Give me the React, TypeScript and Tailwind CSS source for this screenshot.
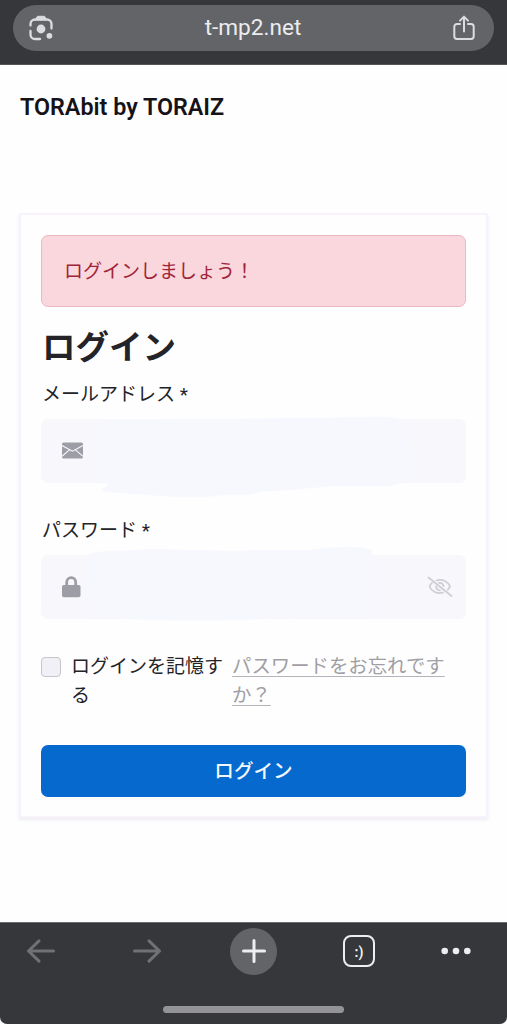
import type { ReactNode } from "react";

export default function App() {
  return (
    <div className="flex h-[1024px] w-[507px] flex-col overflow-hidden bg-[#fefefe] font-['Roboto','Noto_Sans_CJK_JP',sans-serif] text-[#242328]">
      <AddressBar />
      <main className="flex-1 px-[19px]">
        <h1 className="mt-[27px] pl-px text-[23.3px] leading-[30px] font-semibold whitespace-nowrap text-[#151317]">
          TORAbit by TORAIZ
        </h1>
        <LoginCard />
      </main>
      <BottomBar />
    </div>
  );
}

function AddressBar() {
  return (
    <header className="flex h-[65px] shrink-0 items-start border-b border-[#55565a] bg-[#36373b] px-[13px] pt-[5px]">
      <div className="flex h-[46px] w-full items-center justify-between rounded-full bg-[#636468] pr-[18px] pl-[15px] text-[#dcdce0]">
        <LensIcon />
        <span className="text-[22.6px] leading-none text-[#ececf0]">t-mp2.net</span>
        <ShareIcon />
      </div>
    </header>
  );
}

function LoginCard() {
  return (
    <form
      onSubmit={(e) => e.preventDefault()}
      className="mt-[91px] h-[605px] border-2 border-[#f8f3fa] px-5 pt-5 text-[19px] shadow-[0_2px_3px_rgba(90,80,160,0.10)]"
    >
      <div className="flex h-[72px] items-center rounded-[7px] border-[1.5px] border-[#ecb8c2] bg-[#fad6dd] px-[22px] pt-0.5 text-[#a02438]">
        ログインしましょう！
      </div>
      <h2 className="mt-[18px] pl-px text-[33.5px] leading-[46px] font-bold">ログイン</h2>

      <div className="mt-[9px]">
        <Field label="メールアドレス" type="email" icon={<MailIcon />} smudge={<EmailSmudge />} />
      </div>
      <div className="mt-[33px]">
        <Field
          label="パスワード"
          type="password"
          icon={<LockIcon />}
          smudge={<PasswordSmudge />}
          trailing={<EyeOffIcon />}
        />
      </div>

      <div className="mt-[34px] flex leading-[28.5px]">
        <label className="flex w-[191px] shrink-0 items-start">
          <input
            type="checkbox"
            className="mt-1 size-5 shrink-0 appearance-none rounded-[4px] border-[1.5px] border-[#c6c5c9] bg-[#f1f0f6]"
          />
          <span className="ml-[10px] w-[154px]">ログインを記憶する</span>
        </label>
        <a
          href="#"
          className="w-[214px] text-[19.4px] text-[#a09fa5] underline decoration-[#b5b4ba] decoration-1 underline-offset-[3px]"
        >
          パスワードをお忘れですか？
        </a>
      </div>

      <button
        type="submit"
        className="mt-[35px] h-[52px] w-full rounded-[7px] bg-[#0669ce] pt-px text-[19.6px] font-medium text-[#f1f8ff]"
      >
        ログイン
      </button>
    </form>
  );
}

function Field({
  label,
  type,
  icon,
  smudge,
  trailing,
}: {
  label: string;
  type: string;
  icon: ReactNode;
  smudge: ReactNode;
  trailing?: ReactNode;
}) {
  return (
    <div>
      <label className="block h-[39px] pt-px pl-px leading-[28px]">{label} *</label>
      <div className="relative flex h-[64px] items-center rounded-[7px] bg-[#f7f7fc] pr-[13px] pl-5">
        {smudge}
        {icon}
        <input type={type} aria-label={label} className="min-w-0 flex-1 bg-transparent outline-none" />
        {trailing}
      </div>
    </div>
  );
}

function BottomBar() {
  return (
    <footer className="flex h-[102px] shrink-0 flex-col items-center rounded-b-[7px] border-t border-[#6b6c70] bg-[#36373b]">
      <nav className="mt-[4px] flex h-[48px] w-full items-center pr-[36px] pl-[26px] text-[#eeeef0]">
        <ArrowIcon />
        <ArrowIcon className="ml-[76px] rotate-180" />
        <button
          type="button"
          aria-label="New tab"
          className="ml-[68px] flex size-[47px] items-center justify-center rounded-full bg-[#636468]"
        >
          <svg width="24" height="24" viewBox="0 0 24 24" stroke="currentColor" strokeWidth="3" strokeLinecap="round">
            <path d="M12 1.500v21M1.500 12h21" />
          </svg>
        </button>
        <button
          type="button"
          aria-label="Tabs"
          className="ml-[66px] flex size-8 items-center justify-center rounded-[8px] border-[2.5px] border-current pt-0.5 text-[14px] leading-none font-bold"
        >
          :)
        </button>
        <svg className="ml-auto" width="30" height="8" viewBox="0 0 30 8" fill="currentColor">
          <circle cx="3.7" cy="4" r="3.3" />
          <circle cx="15" cy="4" r="3.3" />
          <circle cx="26.3" cy="4" r="3.3" />
        </svg>
      </nav>
      <div className="mt-[31px] h-[7px] w-[181px] rounded-full bg-[#949496]" />
    </footer>
  );
}

function ArrowIcon({ className = "" }: { className?: string }) {
  return (
    <svg
      className={className}
      width="30"
      height="26"
      viewBox="0 0 30 26"
      fill="none"
      stroke="#707175"
      strokeWidth="3"
      strokeLinecap="round"
      strokeLinejoin="round"
    >
      <path d="M27.500 13H2.500M13 2.800 2.500 13 13 23.200" />
    </svg>
  );
}

function LensIcon() {
  return (
    <svg width="26" height="26" viewBox="0 0 26 26" fill="none" stroke="currentColor" strokeWidth="2.3" strokeLinecap="round">
      <path d="M2.500 10.500V9a4.500 4.500 0 0 1 4.500-4.500h12A4.500 4.500 0 0 1 23.500 9v4.500" />
      <path d="M2.500 16v3.500A4.500 4.500 0 0 0 7 24h5" />
      <path d="M7.500 4.500 9.500 1.300h7L18.500 4.500Z" fill="currentColor" strokeWidth="1" strokeLinejoin="round" />
      <circle cx="13" cy="14" r="4.4" fill="currentColor" stroke="none" />
      <circle cx="21.4" cy="20.8" r="2.9" fill="currentColor" stroke="none" />
    </svg>
  );
}

function ShareIcon() {
  return (
    <svg
      width="24"
      height="26"
      viewBox="0 0 24 26"
      fill="none"
      stroke="currentColor"
      strokeWidth="2"
      strokeLinecap="round"
      strokeLinejoin="round"
    >
      <path d="M8 9H5a2.700 2.700 0 0 0-2.700 2.700v9.600A2.700 2.700 0 0 0 5 24h14a2.700 2.700 0 0 0 2.700-2.700v-9.600A2.700 2.700 0 0 0 19 9h-3" />
      <path d="M12 16.500V2M8 5.600l4-4 4 4" />
    </svg>
  );
}

function MailIcon() {
  return (
    <svg className="relative ml-px shrink-0" width="22" height="18" viewBox="0 0 22 18">
      <rect x="0" y="0.5" width="21" height="16" rx="1.6" fill="#9d9da5" />
      <path d="m0 3.500 10.500 5.700L21 3.500M0 14.300l7.500-6.500M21 14.300l-7.500-6.500" fill="none" stroke="#f7f7fc" strokeWidth="1.1" />
    </svg>
  );
}

function LockIcon() {
  return (
    <svg className="relative ml-px shrink-0" width="20" height="22" viewBox="0 0 20 22">
      <path d="M4.700 10V6.200a4.500 4.500 0 0 1 9 0V10" fill="none" stroke="#9d9da5" strokeWidth="2.8" />
      <rect x="0" y="9" width="18.5" height="12.3" rx="1.8" fill="#9d9da5" />
    </svg>
  );
}

function EyeOffIcon() {
  return (
    <svg
      className="shrink-0"
      width="26"
      height="22"
      viewBox="0 0 26 22"
      fill="none"
      stroke="#cfced4"
      strokeWidth="1.8"
      strokeLinecap="round"
    >
      <path d="m1.500 1.500 23 18.500" />
      <path d="M9.500 4.500C15.500 2.600 21.200 5.600 23 10.500c-.5 1.300-1.200 2.300-2.200 3.200" />
      <path d="M5 6.800C3.800 7.900 3 9.200 2.500 10.500c2 5 7.700 7.700 13.500 6.200" />
      <path d="M12 7c2.300-.3 4.200 1 4.600 3.200M9 10.300c.2 2.300 1.800 3.800 4 4" />
    </svg>
  );
}

// Tinted strokes brushed over the field values, spilling past the field edges.
function EmailSmudge() {
  return (
    <svg className="absolute -top-2 left-0" width="425" height="92" viewBox="0 0 425 92" fill="#f6f8fe">
      <path d="M62 10 180 8 265 7 320 6Q348 4 361 9L373 60 365 70Q353 76 338 75L292 75 250 79Q236 80 225 80L207 84 185 84Q155 88 120 85L65 81Q56 79 65 76L67 73 60 70Z" />
    </svg>
  );
}

function PasswordSmudge() {
  return (
    <svg className="absolute -top-2 left-0" width="425" height="78" viewBox="0 0 425 78" fill="#f6f8fe">
      <path d="M46 8Q60 3 78 4L110 2 195 4 220 3 270 3 285 1Q315-2 331 3L333 65 325 71 220 72Q160 75 85 72L50 70Z" />
    </svg>
  );
}
